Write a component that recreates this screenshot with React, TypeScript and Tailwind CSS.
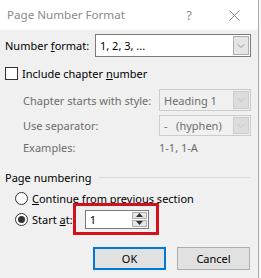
import { ChevronDown } from "lucide-react";

const font = { fontFamily: '"Noto Sans", "Open Sans", sans-serif' };

function Combo({ value, disabled }: { value: string; disabled?: boolean }) {
  return (
    <div
      className={`flex h-full w-full items-center border ${
        disabled ? "border-[#cccccc] bg-[#f0f0f0] text-[#6d6d6d]" : "border-[#7a7a7a] bg-white text-black"
      }`}
    >
      <span className="flex-1 pl-[4px] whitespace-pre">{value}</span>
      <div
        className={`mr-[1px] flex h-[calc(100%-2px)] w-[16px] items-center justify-center border ${
          disabled ? "border-[#cccccc] bg-[#dcdcdc]" : "border-[#adadad] bg-[#e5e5e5]"
        }`}
      >
        <ChevronDown size={12} strokeWidth={1.2} className={disabled ? "text-[#b0b0b0]" : "text-[#606060]"} />
      </div>
    </div>
  );
}

function Radio({ checked }: { checked?: boolean }) {
  return (
    <div className="flex h-[13px] w-[13px] shrink-0 items-center justify-center rounded-full border border-[#333333] bg-white">
      {checked && <div className="h-[7px] w-[7px] rounded-full bg-[#333333]" />}
    </div>
  );
}

export default function App() {
  return (
    <div className="flex h-[278px] w-[261px] whitespace-nowrap bg-[#f7f7f7] text-[11px] leading-none" style={font}>
      <div className="flex h-full w-[259px] flex-col border-r border-[#a9a9a9]">
        <div className="flex h-[30px] shrink-0 items-center bg-white">
          <span className="pl-[7px] text-[11.6px] text-[#8a8a8a]">Page Number Format</span>
          <span className="ml-auto mr-[37px] text-[13px] text-[#8a8a8a]">?</span>
          <svg width="11" height="11" viewBox="0 0 11 11" className="mr-[18px]">
            <path d="M0.5 0.5 L10.5 10.5 M10.5 0.5 L0.5 10.5" stroke="#8a8a8a" strokeWidth="1" />
          </svg>
        </div>
        <div className="flex flex-1 flex-col bg-[#f0f0f0]">
          <div className="mt-[4px] flex h-[23px] items-center">
            <span className="w-[95px] shrink-0 pl-[5px]">
              Number <span className="underline">f</span>ormat:
            </span>
            <div className="h-full w-[156px]">
              <Combo value="1, 2, 3, ..." />
            </div>
          </div>

          <div className="mt-[10px] flex h-[13px] items-center pl-[5px]">
            <div className="h-[13px] w-[13px] shrink-0 border border-[#333333] bg-white" />
            <span className="pl-[4px]">
              Include chapter <span className="underline">n</span>umber
            </span>
          </div>

          <div className="mt-[9px] flex h-[22px] items-center text-[#6d6d6d]">
            <span className="w-[159px] shrink-0 pl-[23px]">Chapter starts with style:</span>
            <div className="h-full w-[92px]">
              <Combo value="Heading 1" disabled />
            </div>
          </div>

          <div className="mt-[4px] flex h-[21px] items-center text-[#6d6d6d]">
            <span className="w-[159px] shrink-0 pl-[23px]">Use separator:</span>
            <div className="h-full w-[92px]">
              <Combo value="-   (hyphen)" disabled />
            </div>
          </div>

          <div className="mt-[4px] flex h-[14px] items-center text-[#6d6d6d]">
            <span className="w-[159px] shrink-0 pl-[23px]">Examples:</span>
            <span>1-1, 1-A</span>
          </div>

          <div className="mt-[16px] flex h-[14px] items-center pl-[5px]">
            <span>Page numbering</span>
            <div className="ml-[8px] mr-[8px] h-px flex-1 bg-[#dcdcdc]" />
          </div>

          <div className="mt-[7px] flex h-[14px] items-center pl-[15px]">
            <Radio />
            <span className="pl-[4px]">
              <span className="underline">C</span>ontinue from previous section
            </span>
          </div>

          <div className="mt-[5px] flex h-[18px] items-center pl-[15px]">
            <Radio checked />
            <span className="pl-[4px]">
              Start <span className="underline">a</span>t:
            </span>
            <div className="ml-auto mr-[101px] flex h-[32px] w-[86px] shrink-0 items-center border-[3px] border-[#d2111b] pl-[9px]">
              <div className="flex h-[19px] w-[64px] items-center border border-[#7a7a7a] bg-white">
                <span className="flex-1 pl-[4px]">1</span>
                <div className="mr-[1px] flex h-[15px] w-[15px] flex-col">
                  <div className="flex h-[7px] items-center justify-center border border-[#adadad] bg-[#e5e5e5]">
                    <svg width="7" height="4" viewBox="0 0 7 4">
                      <path d="M0 4 L3.5 0 L7 4 Z" fill="#333" />
                    </svg>
                  </div>
                  <div className="mt-[1px] flex h-[7px] items-center justify-center border border-[#adadad] bg-[#e5e5e5]">
                    <svg width="7" height="4" viewBox="0 0 7 4">
                      <path d="M0 0 L3.5 4 L7 0 Z" fill="#333" />
                    </svg>
                  </div>
                </div>
              </div>
            </div>
          </div>

          <div className="mt-[19px] flex h-[23px] pl-[93px]">
            <button className="h-full w-[73px] border-2 border-[#0078d7] bg-[#e1e1e1] text-[11px]">OK</button>
            <button className="ml-[11px] h-full w-[73px] border border-[#adadad] bg-[#e1e1e1] text-[11px]">
              Cancel
            </button>
          </div>
        </div>
      </div>
    </div>
  );
}
